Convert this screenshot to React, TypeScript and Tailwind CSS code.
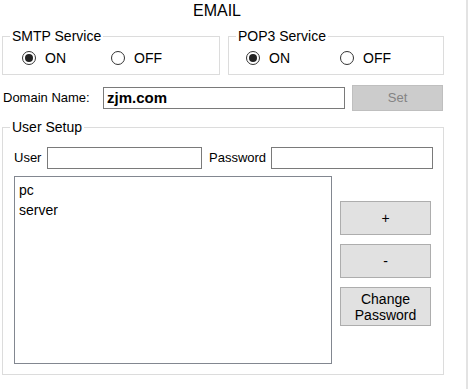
import React from 'react';

interface RadioProps {
  checked?: boolean;
  label: string;
  width?: string;
}

const Radio: React.FC<RadioProps> = ({ checked, label, width }) => (
  <div className={`flex items-center ${width || ''}`}>
    <span className="w-[14px] h-[14px] rounded-full border border-[#333333] bg-white flex items-center justify-center">
      {checked && <span className="w-[8px] h-[8px] rounded-full bg-[#222222]"></span>}
    </span>
    <span className="ml-[9px] text-[14px] leading-[16px]">{label}</span>
  </div>
);

const App: React.FC = () => {
  const users = ['pc', 'server'];

  return (
    <div className="w-[470px] h-[389px] bg-white flex font-['Liberation_Sans',Arial,sans-serif] text-black">
      <div className="w-[466px] h-full flex flex-col">
        <div className="h-[20px] pt-[1px] pl-[193px] text-[16px] leading-[20px]">EMAIL</div>

        {/* Services */}
        <div className="mt-[8px] flex pl-[2px] gap-[8px]">
          <fieldset className="w-[218px] border border-[#dcdcdc] pl-[7px] pb-[6px]">
            <legend className="px-[2px] text-[14px] leading-[16px]">SMTP Service</legend>
            <div className="mt-[4px] h-[20px] flex items-center pl-[12px]">
              <Radio checked label="ON" width="w-[89px]" />
              <Radio label="OFF" />
            </div>
          </fieldset>
          <fieldset className="w-[216px] border border-[#dcdcdc] pl-[7px] pb-[6px]">
            <legend className="px-[2px] text-[14px] leading-[16px]">POP3 Service</legend>
            <div className="mt-[4px] h-[20px] flex items-center pl-[10px]">
              <Radio checked label="ON" width="w-[94px]" />
              <Radio label="OFF" />
            </div>
          </fieldset>
        </div>

        {/* Domain */}
        <div className="mt-[10px] h-[26px] flex items-center pl-[3px]">
          <span className="w-[100px] text-[13px]">Domain Name:</span>
          <input
            readOnly
            value="zjm.com"
            className="w-[242px] h-[22px] border border-[#7a7a7a] pl-[3px] font-bold text-[15px] outline-none"
          />
          <button className="ml-[7px] w-[91px] h-[26px] bg-[#cccccc] border border-[#bfbfbf] text-[#838383] text-[13px]">Set</button>
        </div>

        {/* User Setup */}
        <fieldset className="mt-[8px] ml-[2px] w-[442px] border border-[#dcdcdc] pl-[7px] pb-[10px]">
          <legend className="px-[2px] text-[14px] leading-[16px]">User Setup</legend>
          <div className="mt-[12px] h-[22px] flex items-center pl-[4px]">
            <span className="w-[33px] text-[13px]">User</span>
            <input readOnly className="w-[155px] h-[22px] border border-[#7a7a7a] outline-none" />
            <span className="ml-[7px] w-[62px] text-[13px]">Password</span>
            <input readOnly className="w-[162px] h-[22px] border border-[#7a7a7a] outline-none" />
          </div>
          <div className="mt-[7px] flex pl-[4px]">
            <div className="w-[318px] h-[188px] border border-[#828790] pl-[4px] pt-[3px]">
              {users.map(u => (
                <div key={u} className="text-[14px] leading-[20px]">{u}</div>
              ))}
            </div>
            <div className="ml-[8px] mt-[25px] flex flex-col gap-[9px]">
              <button className="w-[91px] h-[34px] bg-[#e1e1e1] border border-[#adadad] text-[14px]">+</button>
              <button className="w-[91px] h-[34px] bg-[#e1e1e1] border border-[#adadad] text-[14px]">-</button>
              <button className="w-[91px] h-[39px] bg-[#e1e1e1] border border-[#adadad] text-[14px] leading-[16px]">
                Change<br />Password
              </button>
            </div>
          </div>
        </fieldset>
      </div>
      <div className="w-[2px] h-full bg-[#e3e3e3]"></div>
    </div>
  );
};

export default App;
